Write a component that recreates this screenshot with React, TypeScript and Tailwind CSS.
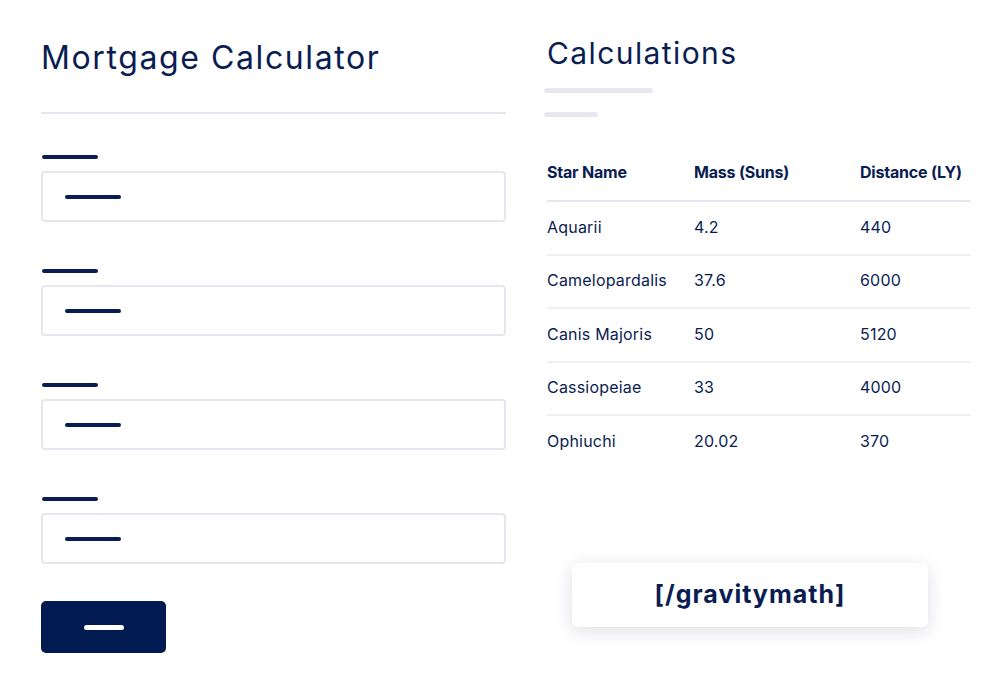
const rows = [
  { name: "Aquarii", mass: "4.2", dist: "440" },
  { name: "Camelopardalis", mass: "37.6", dist: "6000" },
  { name: "Canis Majoris", mass: "50", dist: "5120" },
  { name: "Cassiopeiae", mass: "33", dist: "4000" },
  { name: "Ophiuchi", mass: "20.02", dist: "370" },
];

function Field() {
  return (
    <div className="flex flex-col">
      <div className="ml-[1px] h-[4px] w-[56px] rounded-full bg-[#0a1d52]" />
      <div className="mt-[12px] flex h-[51px] items-center rounded-[4px] border-2 border-[#e6e6ee] pl-[22px]">
        <div className="h-[4px] w-[56px] rounded-full bg-[#0a1d52]" />
      </div>
    </div>
  );
}

export default function App() {
  return (
    <div
      className="flex h-[700px] w-[1000px] bg-white text-[#0a1d52]"
      style={{ fontFamily: "Inter, 'Noto Sans', sans-serif" }}
    >
      <div className="ml-[41px] flex w-[465px] flex-col pt-[38px]">
        <h1 className="text-[32px] leading-[40px] tracking-[1.6px]">Mortgage Calculator</h1>
        <div className="mt-[34px] h-[2px] w-full bg-[#e6e6ee]" />
        <div className="mt-[41px] flex flex-col gap-[47px]">
          <Field />
          <Field />
          <Field />
          <Field />
        </div>
        <div className="mt-[37px] flex h-[52px] w-[125px] items-center justify-center rounded-[5px] bg-[#021a52]">
          <div className="h-[5px] w-[40px] rounded-full bg-white" />
        </div>
      </div>

      <div className="ml-[41px] flex w-[424px] flex-col pt-[34px]">
        <h2 className="text-[30px] leading-[38px] tracking-[1.4px]">Calculations</h2>
        <div className="ml-[-3px] mt-[16px] h-[5px] w-[109px] rounded-full bg-[#e6e7ef]" />
        <div className="ml-[-3px] mt-[19px] h-[5px] w-[54px] rounded-full bg-[#e6e7ef]" />
        <table className="mt-[28px] w-full border-collapse text-left text-[16px] tracking-[0.2px]">
          <thead>
            <tr className="border-b-2 border-[#e6e6ee]">
              <th className="h-[56px] w-[147px] pb-[2px] font-bold tracking-[-0.2px]">Star Name</th>
              <th className="w-[166px] pb-[2px] font-bold tracking-[-0.2px]">Mass (Suns)</th>
              <th className="pb-[2px] font-bold tracking-[-0.2px]">Distance (LY)</th>
            </tr>
          </thead>
          <tbody>
            {rows.map((r, i) => (
              <tr key={r.name} className={i < rows.length - 1 ? "border-b-2 border-[#f0f0f4]" : ""}>
                <td className="h-[53.5px] pb-[2px]">{r.name}</td>
                <td className="pb-[2px]">{r.mass}</td>
                <td className="pb-[2px]">{r.dist}</td>
              </tr>
            ))}
          </tbody>
        </table>
        <div className="ml-[25px] mt-[94px] flex h-[64px] w-[356px] items-center justify-center rounded-[6px] bg-white shadow-[0_4px_18px_rgba(20,30,80,0.14)]">
          <span className="text-[25px] font-bold tracking-[1px]">[/gravitymath]</span>
        </div>
      </div>
    </div>
  );
}
